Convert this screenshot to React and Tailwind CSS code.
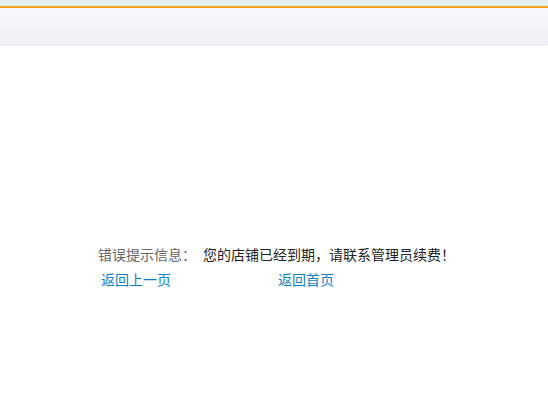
import React from 'react';

export default function App() {
    return (
        <div className="w-[548px] h-[394px] bg-white font-['Microsoft_YaHei','Noto_Sans_CJK_SC',sans-serif] text-[14px]">
            {/* Header strip */}
            <div className="h-[6px] bg-[#dff0ee]"></div>
            <div className="h-[2px] bg-[#f7a11a]"></div>
            <div className="h-[38px] bg-gradient-to-b from-[#f8f8fd] to-[#edf1f4]"></div>

            {/* Error message */}
            <div className="pt-[198px] pl-[98px]">
                <div className="flex items-center h-[20px] leading-[20px]">
                    <span className="w-[105px] text-[#666]">错误提示信息：</span>
                    <span className="text-[#222]">您的店铺已经到期，请联系管理员续费！</span>
                </div>
                <div className="flex items-center h-[20px] leading-[20px] mt-[5px] pl-[3px]">
                    <a className="w-[177px] text-[#0a82c8] cursor-pointer">返回上一页</a>
                    <a className="text-[#0a82c8] cursor-pointer">返回首页</a>
                </div>
            </div>
        </div>
    );
}
